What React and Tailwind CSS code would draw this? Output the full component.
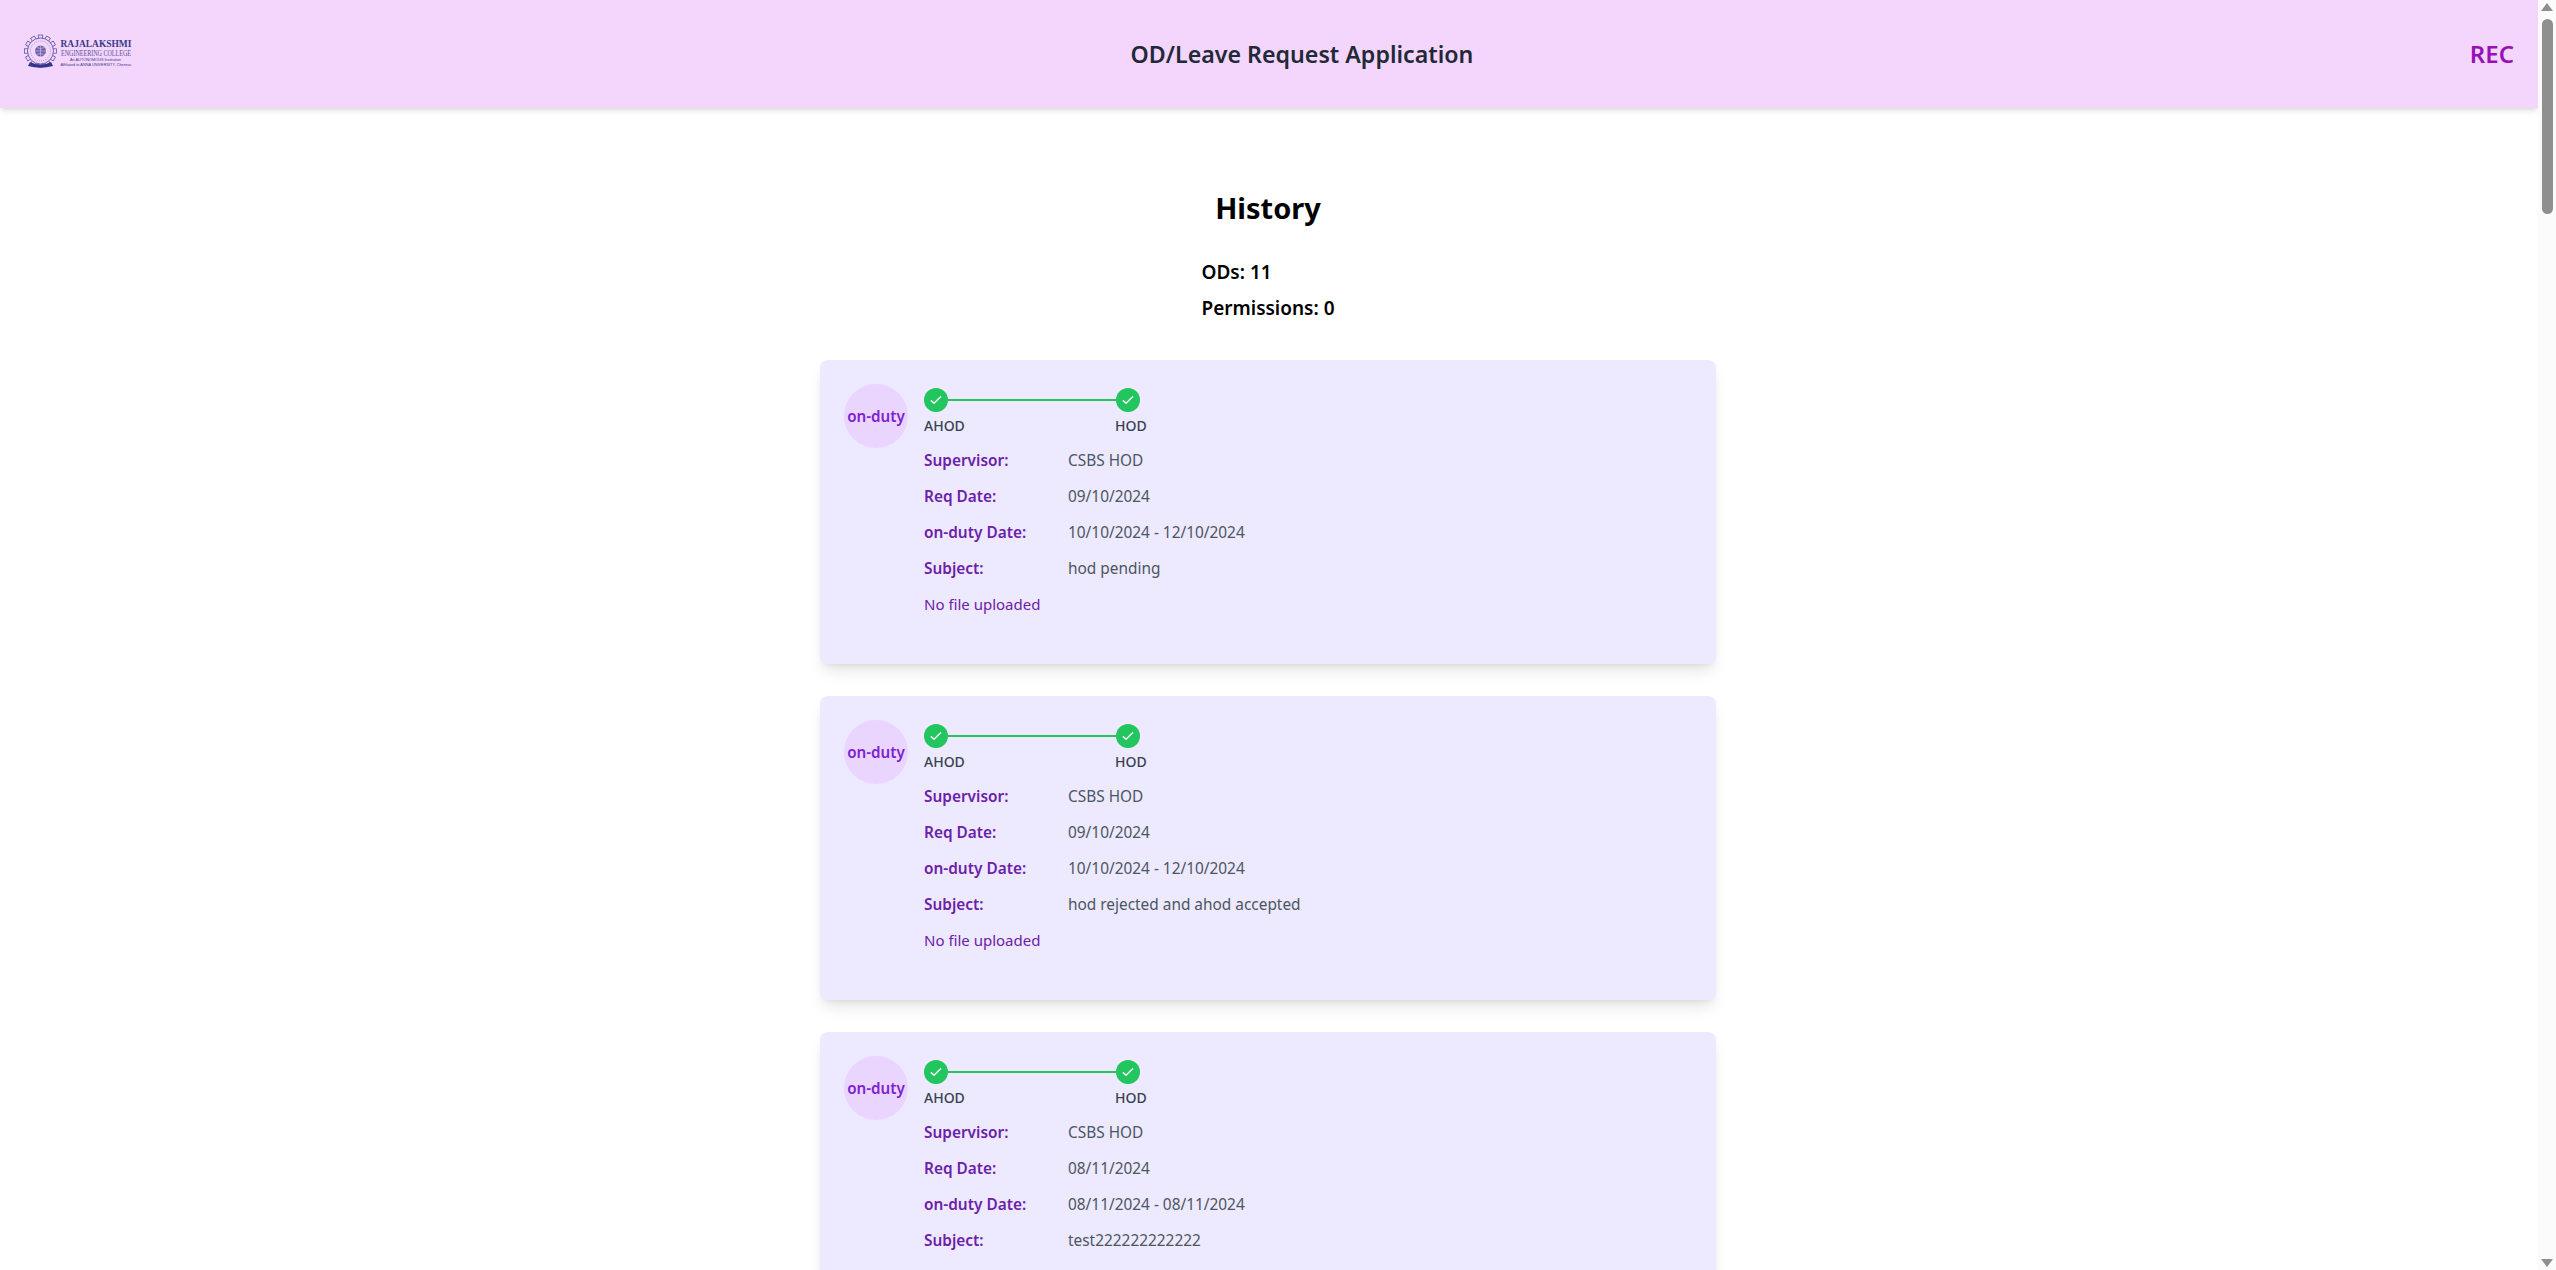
import React from "react";

const sans = "font-['Noto_Sans',sans-serif]";

const cards = [
  { sup: "CSBS HOD", req: "09/10/2024", range: "10/10/2024 - 12/10/2024", subject: "hod pending" },
  { sup: "CSBS HOD", req: "09/10/2024", range: "10/10/2024 - 12/10/2024", subject: "hod rejected and ahod accepted" },
  { sup: "CSBS HOD", req: "08/11/2024", range: "08/11/2024 - 08/11/2024", subject: "test222222222222" },
];

function Logo() {
  const teeth = Array.from({ length: 12 }, (_, i) => i * 30);
  return (
    <svg width="110" height="34" viewBox="0 0 110 34" className="block mb-1 overflow-visible">
      <g transform="translate(16.5 16)" fill="none" stroke="#4a4896">
        {teeth.map((a) => (
          <rect key={a} x="-2.2" y="-16" width="4.4" height="4" fill="#f4d5fc" strokeWidth="0.7" transform={`rotate(${a})`} />
        ))}
        <circle r="13" strokeWidth="0.8" fill="#f4d5fc" />
        <circle r="10" strokeWidth="0.4" strokeDasharray="1 1" />
        <circle r="5.5" strokeWidth="0" fill="#3f3d8f" opacity="0.75" />
        <path d="M-5.5 0H5.5M0 -5.5V5.5M-4 -3.5Q0 -1.5 4 -3.5M-4 3.5Q0 1.5 4 3.5" stroke="#f4d5fc" strokeWidth="0.5" />
      </g>
      <path d="M6 27Q16.5 32 27 27L29 31Q16.5 34.5 4 31Z" fill="#35338a" />
      <g fontFamily="'Liberation Serif',serif" fill="#3b3988">
        <text x="36.5" y="11.5" fontSize="11" fontWeight="700" textLength="71" lengthAdjust="spacingAndGlyphs">RAJALAKSHMI</text>
        <text x="37" y="21" fontSize="7.5" textLength="70" lengthAdjust="spacingAndGlyphs" fill="#5553a0">ENGINEERING COLLEGE</text>
      </g>
      <g fontFamily="'Liberation Sans',sans-serif" fill="#3b3988" fontSize="3">
        <text x="46" y="26" textLength="51" lengthAdjust="spacingAndGlyphs">An AUTONOMOUS Institution</text>
        <text x="36.5" y="31" textLength="70.5" lengthAdjust="spacingAndGlyphs">Affiliated to ANNA UNIVERSITY, Chennai</text>
      </g>
    </svg>
  );
}

function Check() {
  return (
    <div className="w-6 h-6 rounded-full bg-[#22c55e] flex items-center justify-center shrink-0">
      <svg width="16" height="16" viewBox="0 0 24 24" fill="none" stroke="white" strokeWidth="2.2" strokeLinecap="round" strokeLinejoin="round">
        <path d="M5 13l4 4L19 7" />
      </svg>
    </div>
  );
}

function Row({ label, value }) {
  return (
    <div className="flex mb-4 text-[15.4px] leading-5">
      <span className="w-36 shrink-0 font-semibold text-[#6b21a8]">{label}</span>
      <span className="text-[#4b5563]">{value}</span>
    </div>
  );
}

function Card({ sup, req, range, subject }) {
  return (
    <div className="bg-[#ede9fe] rounded-lg p-6 mb-8 shadow-lg flex gap-4 items-start w-[896px]">
      <div className="w-16 h-16 rounded-full bg-[#e9d5ff] flex items-center justify-center shrink-0 text-[15.2px] font-semibold text-[#7e22ce] whitespace-nowrap">
        on-duty
      </div>
      <div className="flex-1 pt-1">
        <div className="w-[216px]">
          <div className="flex items-center">
            <Check />
            <div className="w-[168px] h-0.5 bg-[#22c55e]" />
            <Check />
          </div>
          <div className="flex justify-between mt-1 text-sm leading-5 font-medium text-[#374151] w-[215px]">
            <span>AHOD</span>
            <span className="w-[24px] whitespace-nowrap">HOD</span>
          </div>
        </div>
        <div className="mt-[15px]">
          <Row label="Supervisor:" value={sup} />
          <Row label="Req Date:" value={req} />
          <Row label="on-duty Date:" value={range} />
          <Row label="Subject:" value={subject} />
          <p className="text-[15px] leading-5 text-[#6b21a8] mt-[-1px] mb-[26px]">No file uploaded</p>
        </div>
      </div>
    </div>
  );
}

function Scrollbar() {
  return (
    <div className="w-[18px] h-full bg-[#fbfbfb] flex flex-col items-center shrink-0">
      <svg width="12" height="8" viewBox="0 0 12 8" className="mt-[3px] mb-[8px] shrink-0">
        <path d="M6 0L12 8H0Z" fill="#8f8f8f" />
      </svg>
      <div className="w-[11px] h-[195px] rounded-md bg-[#8f8f8f]" />
      <div className="flex-1" />
      <svg width="12" height="8" viewBox="0 0 12 8" className="mb-[3px] shrink-0">
        <path d="M0 0H12L6 8Z" fill="#8f8f8f" />
      </svg>
    </div>
  );
}

export default function App() {
  return (
    <div className={`${sans} flex h-[1270px] w-[2556px] overflow-hidden bg-white`}>
      <div className="flex-1 h-full overflow-hidden">
        <header className="h-[108px] bg-[#f4d5fc] shadow-md flex items-center justify-between px-6">
          <Logo />
          <h1 className="text-[23.2px] font-semibold text-[#1f2937]">OD/Leave Request Application</h1>
          <span className="text-[24px] font-semibold text-[#9810b8]">REC</span>
        </header>
        <main className="flex flex-col items-center pt-[82px] pr-[2px]">
          <h2 className="text-[29px] font-bold text-black leading-9 mb-[32px]">History</h2>
          <div className="w-fit mb-[30px] text-[19px] font-semibold leading-7 text-black">
            <p className="mb-2">ODs: 11</p>
            <p className="mb-2">Permissions: 0</p>
          </div>
          {cards.map((c, i) => (
            <Card key={i} {...c} />
          ))}
        </main>
      </div>
      <Scrollbar />
    </div>
  );
}
